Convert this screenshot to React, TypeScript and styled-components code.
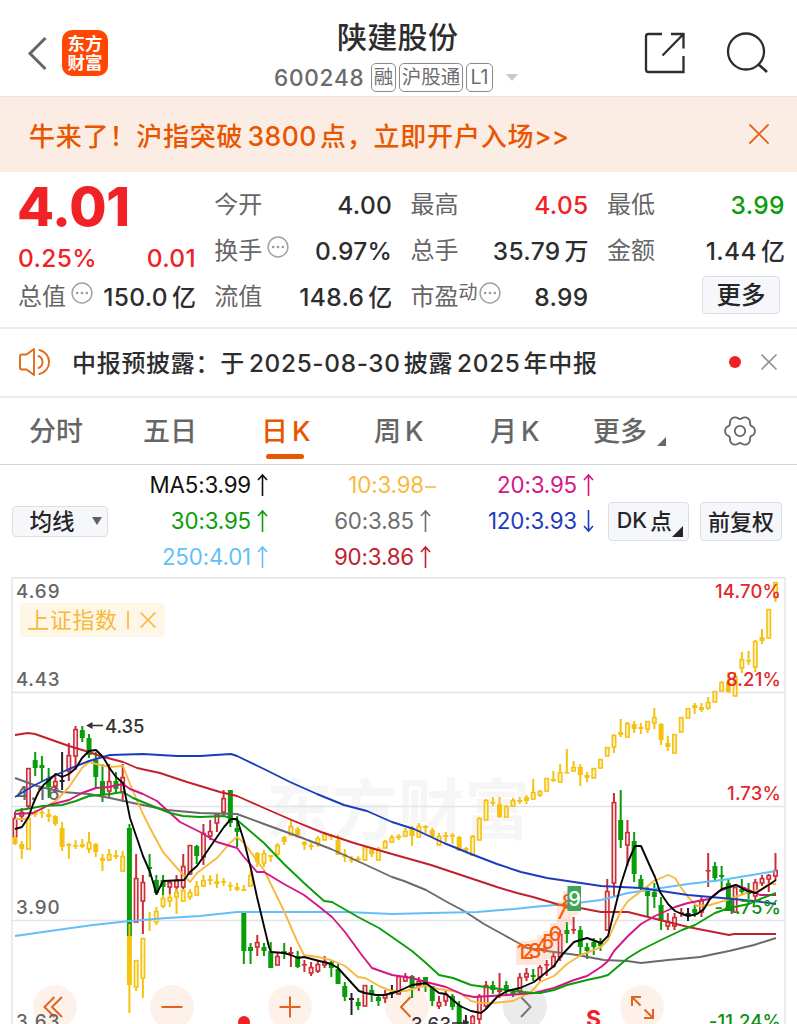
import React from "react";
import styled, { createGlobalStyle } from "styled-components";

const GlobalStyle = createGlobalStyle`
  * { box-sizing: border-box; }
  html, body { margin: 0; padding: 0; background: #fff; }
  body {
    width: 797px;
    height: 1024px;
    overflow: hidden;
    font-family: Inter, "Noto Sans CJK SC", sans-serif;
    color: #2d2d2f;
    text-autospace: no-autospace;
  }
`;

const UP = "#f02226";
const DOWN = "#0a9d0a";
const ACCENT = "#e85600";

const Screen = styled.main`
  display: flex;
  flex-direction: column;
  width: 797px;
  height: 1024px;
  overflow: hidden;
  white-space: nowrap;
`;

/* ---------- header ---------- */
const Header = styled.header`
  display: grid;
  grid-template-columns: 274px 1fr 170px;
  height: 97px;
  border-bottom: 1px solid #e6e6e8;
`;
const HeaderLeft = styled.div`
  display: flex;
  align-items: flex-start;
  padding: 30px 0 0 27px;
  gap: 14px;
`;
const HeaderRight = styled.div`
  display: flex;
  align-items: flex-start;
  gap: 38px;
  padding: 30px 0 0 15px;
`;
const Logo = styled.div`
  display: grid;
  grid-template-columns: 17.5px 17.5px;
  grid-auto-rows: 19px;
  place-content: center;
  place-items: center;
  width: 46px;
  height: 46px;
  padding-bottom: 1px;
  border-radius: 10px;
  background: #ff4602;
  color: #fff;
  font-size: 17.5px;
  line-height: 19px;
  font-weight: 700;
`;
const TitleBlock = styled.div`
  display: flex;
  flex-direction: column;
`;
const Title = styled.h1`
  margin: 16px 0 0 63px;
  font-size: 30px;
  line-height: 42px;
  letter-spacing: 0.3px;
  font-weight: 500;
`;
const SubTitle = styled.div`
  display: flex;
  align-items: center;
  margin-top: 5px;
  height: 29px;
`;
const Code = styled.span`
  width: 97px;
  font-size: 22.5px;
  letter-spacing: 0.8px;
  font-weight: 500;
  color: #6b6b6b;
`;
const Tag = styled.span<{ $w: number }>`
  display: flex;
  align-items: center;
  justify-content: center;
  width: ${(p) => p.$w}px;
  height: 29px;
  margin-right: 3px;
  border: 1px solid #8a8a8a;
  border-radius: 5px;
  font-size: 19.5px;
  line-height: 27px;
  color: #6e6e6e;
`;
const Caret = styled.i`
  margin-left: 10px;
  border: 6.5px solid transparent;
  border-top: 7px solid #c9c9c9;
  border-bottom: 0;
`;

/* ---------- banner ---------- */
const Banner = styled.section`
  display: flex;
  align-items: center;
  justify-content: space-between;
  height: 75px;
  padding: 0 28px 1px 29px;
  background: #fcede4;
  color: ${ACCENT};
  font-size: 26px;
  font-weight: 500;
  letter-spacing: 0.8px;
`;
const Latin = styled.span<{ $l?: number; $r?: number; $ls?: number; $size?: number }>`
  margin-left: ${(p) => p.$l ?? 4}px;
  margin-right: ${(p) => p.$r ?? 3}px;
  letter-spacing: ${(p) => p.$ls ?? 0.5}px;
  font-size: ${(p) => (p.$size ? `${p.$size}px` : "inherit")};
`;

/* ---------- quote ---------- */
const Quote = styled.section`
  display: grid;
  grid-template-columns: repeat(4, 178px);
  column-gap: 18.3px;
  height: 157px;
  padding: 10px 0 0 18px;
  border-bottom: 2px solid #ededf0;
`;
const QuoteColumn = styled.div`
  display: grid;
  grid-template-rows: 46px 46px 46px;
`;
const PriceColumn = styled.div`
  display: grid;
  grid-template-rows: 59px 33px 46px;
`;
const Price = styled.div`
  margin: -2px 0 0 -1px;
  font-size: 54px;
  line-height: 54px;
  font-weight: 800;
  letter-spacing: -0.3px;
  color: ${UP};
`;
const Row = styled.div<{ $color?: string }>`
  display: flex;
  align-items: center;
  justify-content: space-between;
  color: ${(p) => p.$color ?? "#2d2d2f"};
  font-size: 24.5px;
  line-height: 34px;
  font-weight: 500;
  letter-spacing: 0.35px;
`;
const Label = styled.span`
  display: flex;
  align-items: center;
  color: #666;
  font-size: 24px;
  font-weight: 400;
  letter-spacing: 0;
`;
const Unit = styled.span`
  margin-left: 4px;
  font-size: 24px;
  letter-spacing: 0;
`;
const Sup = styled.span`
  margin-top: -9px;
  font-size: 19px;
`;
const InfoWrap = styled.span<{ $l: number }>`
  display: flex;
  margin: -9px 0 0 ${(p) => p.$l}px;
`;
const SmallButton = styled.button<{ $w: number; $h: number; $size: number; $pad?: string }>`
  display: flex;
  align-items: center;
  justify-content: center;
  position: relative;
  width: ${(p) => p.$w}px;
  height: ${(p) => p.$h}px;
  padding: ${(p) => p.$pad ?? "0 0 3px"};
  border: 1px solid #dadfe4;
  border-radius: 4px;
  background: #f5f7fa;
  font-family: inherit;
  font-size: ${(p) => p.$size}px;
  font-weight: 500;
  color: #252527;
`;
const MoreSlot = styled.div`
  display: flex;
  align-items: flex-start;
  padding: 2px 0 0 95px;
`;

/* ---------- notice ---------- */
const Notice = styled.section`
  display: flex;
  align-items: center;
  height: 69px;
  padding: 0 20px 2px 18px;
  border-bottom: 2px solid #ededf0;
  font-size: 24px;
  font-weight: 500;
  letter-spacing: 0.7px;
`;
const NoticeText = styled.span`
  flex: 1;
  margin-left: 20px;
`;
const Dot = styled.i`
  width: 12px;
  height: 12px;
  margin-right: 20px;
  border-radius: 50%;
  background: ${UP};
`;

/* ---------- tabs ---------- */
const Tabs = styled.nav`
  display: grid;
  grid-template-columns: 114px 118px 113px 116px 103px 131px 1fr;
  height: 67px;
  padding-left: 29px;
  border-bottom: 1px solid #d4d4d6;
`;
const Tab = styled.div<{ $active?: boolean }>`
  position: relative;
  padding-top: 13px;
  font-size: 27px;
  line-height: 42px;
  font-weight: 500;
  color: ${(p) => (p.$active ? ACCENT : "#666")};
`;
const Underline = styled.i`
  position: absolute;
  left: 5px;
  top: 56px;
  width: 38px;
  height: 5px;
  border-radius: 3px;
  background: ${ACCENT};
`;
const Corner = styled.i<{ $s: number; $c: string; $x: number; $y: number }>`
  position: absolute;
  left: ${(p) => p.$x}px;
  top: ${(p) => p.$y}px;
  border-left: ${(p) => p.$s}px solid transparent;
  border-bottom: ${(p) => p.$s}px solid ${(p) => p.$c};
`;

/* ---------- moving averages ---------- */
const MaPanel = styled.section`
  display: grid;
  grid-template-columns: 96px 163px 163px 163px 11px 81px 11px 82px;
  align-items: center;
  height: 112px;
  padding-left: 12px;
`;
const MaColumn = styled.div`
  display: flex;
  flex-direction: column;
  padding-bottom: 1px;
`;
const MaItem = styled.div<{ $color: string; $shift?: number }>`
  display: flex;
  align-items: center;
  justify-content: flex-end;
  height: 36px;
  margin-right: ${(p) => -(p.$shift ?? 0)}px;
  color: ${(p) => p.$color};
  font-size: 22.3px;
  letter-spacing: -0.15px;
`;
const Triangle = styled.i`
  margin: 2px 0 0 17px;
  border: 5px solid transparent;
  border-top: 8px solid #606064;
  border-bottom: 0;
`;

/* ---------- chart ---------- */
const ChartArea = styled.section`
  position: relative;
  flex: 1;
  overflow: hidden;
`;
const ChartSvg = styled.svg`
  position: absolute;
  inset: 0;
  font-family: Inter, "Noto Sans CJK SC", sans-serif;
`;
const Watermark = styled.div`
  position: absolute;
  left: 266px;
  top: 180px;
  font: 700 66px/96px "Noto Sans CJK SC", sans-serif;
  color: #f6f6f6;
`;
const RoundButton = styled.button<{ $x: number; $gray?: boolean }>`
  position: absolute;
  left: ${(p) => p.$x - 22}px;
  top: 408px;
  width: 44px;
  height: 44px;
  padding: 0;
  border: 0;
  border-radius: 50%;
  background: ${(p) => (p.$gray ? "#ebebeb" : "#fef1ea")};
  color: ${(p) => (p.$gray ? "#777" : "#e2651f")};
`;
const IndexTag = styled.div`
  position: absolute;
  left: 20px;
  top: 26px;
  display: flex;
  align-items: center;
  gap: 9px;
  width: 145px;
  height: 34px;
  padding-left: 7px;
  border-radius: 4px;
  background: #fef6e6;
  color: #f9b93c;
  font-size: 22px;
  line-height: 32px;
  letter-spacing: 0.7px;
`;

const Cross = ({ size, color, width }: { size: number; color: string; width: number }) => (
  <svg width={size} height={size} viewBox={`0 0 ${size} ${size}`} fill="none" stroke={color} strokeWidth={width} strokeLinecap="round">
    <path d={`M1 1L${size - 1} ${size - 1}M${size - 1} 1L1 ${size - 1}`} />
  </svg>
);

const Info = ({ left = 5 }: { left?: number }) => (
  <InfoWrap $l={left}>
    <svg width="22" height="22" viewBox="0 0 22 22" fill="none" stroke="#a2a2a2" strokeWidth="1.5">
      <circle cx="11" cy="11" r="9.9" />
      <g fill="#999" stroke="none">
        <circle cx="6.2" cy="11" r="1.3" />
        <circle cx="11" cy="11" r="1.3" />
        <circle cx="15.8" cy="11" r="1.3" />
      </g>
    </svg>
  </InfoWrap>
);

const Arrow = ({ dir }: { dir: "up" | "down" | "flat" }) =>
  dir === "flat" ? (
    <svg width="13" height="24" viewBox="0 0 13 24" fill="none" stroke="currentColor" strokeWidth="1.6">
      <path d="M1 14H12" />
    </svg>
  ) : (
    <svg width="19" height="24" viewBox="0 0 19 24" fill="none" stroke="currentColor" strokeWidth="1.6">
      <path d={dir === "up" ? "M11.5 23V2M7 7L11.5 2L16 7" : "M11.5 1V22M7 17L11.5 22L16 17"} />
    </svg>
  );

const gearPath =
  Array.from({ length: 121 }, (_, i) => {
    const t = (i * Math.PI) / 60;
    const r = 13.7 + 1.45 * Math.cos(6 * t) - 0.25 * Math.cos(12 * t);
    return `${i ? "L" : "M"}${(16 + r * Math.cos(t)).toFixed(2)} ${(16 + r * Math.sin(t)).toFixed(2)}`;
  }).join("") + "Z";

/* Candle: high, body top, body bottom, low, kind (r hollow, g filled, k flat). */
type Candle = [number, number, number, number, string];
const parse = (s: string): Candle[] =>
  s.trim().split(/\s+/).map((c) => {
    const p = c.split(",");
    return [+p[0], +p[1], +p[2], +p[3], p[4]];
  });

const stock = parse(`
812,818,837,840,r 808,812,816,822,r 768,768,806,808,r 752,760,768,776,g 756,765,768,781,g 768,778,787,798,g
773,781,786,793,r 752,780,782,790,k 743,755,771,781,r 726,729,756,770,r 726,730,738,742,g 734,738,755,758,g
752,760,777,788,g 764,781,794,802,g 764,781,791,798,r 772,781,789,793,g 764,777,792,802,r 824,828,936,955,g
854,878,922,922,r 875,882,901,934,r 854,867,869,877,g 875,880,893,895,g 875,880,887,895,g 880,882,887,894,r
875,880,887,894,r 854,866,887,889,r 845,845,874,875,r 845,846,856,864,g 824,833,857,865,r 820,831,836,840,r
813,814,823,832,r 790,798,812,817,r 790,790,823,827,g 816,828,832,847,g 913,913,951,964,g 943,947,951,964,g
935,942,947,956,r 943,947,951,956,g 942,951,968,968,g 953,956,965,965,r 943,951,954,959,g 947,952,954,967,r
951,956,967,968,g 960,964,965,972,r 962,967,973,976,r 960,964,971,973,r 956,961,965,968,r 961,962,968,977,g
964,969,984,984,g 982,986,997,1001,g 993,998,1000,1015,k 998,1002,1006,1010,g 985,985,1006,1006,r 985,990,994,1002,g
994,997,1001,1006,g 990,994,998,1003,r 985,992,994,998,k 976,976,994,994,r 973,976,981,982,r 975,976,988,998,g
977,981,986,991,r 977,977,987,992,g 986,986,1001,1006,g 996,1002,1006,1009,r 990,994,1001,1006,r 994,996,1007,1010,g
1001,1005,1024,1026,g 1015,1021,1023,1026,k 1015,1016,1024,1026,r 994,996,1019,1024,r 981,985,1006,1009,r 981,985,990,994,g
973,990,992,998,r 981,985,991,994,g 989,992,995,997,g 973,977,991,994,r 968,973,977,981,r 969,975,977,981,g
965,967,977,981,r 960,964,965,976,r 952,956,966,968,r 930,934,957,961,r 922,930,934,943,g 917,929,930,934,r
926,930,947,955,g 943,947,951,959,g 938,942,947,955,g 938,942,946,951,g 879,891,930,931,r 793,802,883,896,r
790,820,840,848,g 820,832,845,866,r 832,841,874,882,g 875,879,887,891,g 887,891,896,916,g 883,892,897,908,g
897,905,921,930,g 913,921,926,930,r 913,917,926,930,r 908,912,914,917,r 908,913,915,921,k 905,909,913,917,g
897,900,912,917,r 853,870,871,887,r 862,866,878,882,g 866,875,877,891,g 879,883,911,911,g 887,887,912,913,r
879,889,892,894,g 883,892,894,899,g 879,882,896,900,r 875,878,883,886,r 874,875,879,892,r 853,870,876,880,r`);

const index = parse(`
836,837,844,845,g 841,844,849,859,g 818,818,849,849,r 810,812,815,817,g 809,812,813,818,g 809,814,817,822,g
815,816,824,826,g 822,828,847,851,g 843,844,846,859,r 840,845,846,849,g 839,844,847,848,g 832,842,849,853,r
843,844,852,857,g 854,858,861,871,g 849,854,860,861,r 850,855,857,859,r 851,856,871,871,r 924,936,985,1013,g
960,960,987,991,r 938,938,978,998,r 912,919,920,931,g 907,911,922,925,r 895,898,906,908,r 894,897,901,907,r
889,892,897,914,r 889,890,901,902,r 889,892,897,900,r 881,886,895,895,r 875,880,886,887,r 875,879,881,885,g
874,881,884,888,r 878,881,882,886,g 882,885,886,891,g 883,887,890,891,g 885,889,891,891,g 871,875,886,886,r
852,853,862,867,g 850,853,863,867,r 855,855,857,862,g 843,845,854,856,r 836,837,842,845,g 820,826,835,835,r
827,829,835,838,g 841,842,845,850,g 843,845,847,850,g 836,838,843,847,r 832,834,840,840,r 834,835,837,840,g
835,840,855,855,g 849,854,857,862,g 856,859,860,863,g 856,858,860,861,g 846,847,860,860,r 848,849,854,857,g
847,849,860,860,r 840,841,848,848,r 835,837,842,843,r 834,836,838,840,g 828,831,836,837,r 826,828,836,846,g
823,826,837,837,r 825,826,828,833,g 828,830,837,837,g 833,836,845,845,r 832,835,837,842,g 833,835,836,844,g
836,837,851,851,g 847,848,851,852,g 835,836,855,855,r 817,818,840,840,r 799,800,820,820,r 797,802,803,806,g
797,804,817,818,g 805,806,817,817,r 798,800,806,807,r 797,800,802,804,g 795,797,801,804,g 779,792,799,800,r
790,791,795,797,r 778,778,791,791,r 771,779,781,782,g 764,772,782,782,r 749,772,773,773,g 761,767,771,771,r
764,767,775,786,g 772,775,778,782,g 768,768,778,778,r 759,759,768,768,r 747,747,756,756,r 734,735,747,753,r
719,732,735,737,g 722,723,737,737,r 721,724,729,733,g 723,727,729,734,g 721,721,729,733,r 708,717,723,729,r
723,724,740,745,g 736,743,747,751,g 734,734,753,753,r 717,717,732,732,r 708,708,718,718,r 703,705,708,714,g
703,707,710,712,g 697,702,708,710,r 691,691,702,702,r 681,682,691,691,r 672,682,692,693,g 672,676,696,696,r
652,659,668,673,r 651,660,661,665,g 640,641,667,672,r 629,637,641,644,g 609,609,638,638,r 582,582,597,602,r`);

const averages: [string, string][] = [
  ["#6a6a6a", "15,778 37,786 62,792 89,794 110,798 133,803 167,810 200,813 237,814 264,824 297,836 331,849 364,864 392,877 404,881 426,890 447,902 464,911 484,924 504,935 522,945 527,948 547,951 577,955 604,960 627,961 641,963 668,960 700,957 729,951 754,945 776,938"],
  ["#63bff8", "15,936 50,931 93,925 130,921 167,918 200,916 237,912 270,912 347,912 392,914 431,913 477,912 514,909 533,907 577,903 601,900 628,893 661,888 688,884 722,880 776,871"],
  ["#c1202c", "15,735 28,733 35,734 69,746 89,752 100,756 123,762 137,768 160,773 187,782 220,792 237,796 264,808 294,821 321,832 354,843 392,854 431,865 464,876 497,887 517,893 533,897 560,905 580,908 601,912 628,912 648,917 668,922 688,927 729,935 734,934 776,934"],
  ["#f8b93f", "15,819 25,819 35,812 49,805 57,800 69,787 82,768 89,762 100,765 110,767 123,766 130,784 142,812 150,828 163,852 177,868 190,882 197,873 217,858 230,843 237,837 244,843 264,870 284,911 297,941 304,955 318,957 331,960 345,966 358,977 365,978 381,987 392,991 406,991 419,987 426,986 439,989 453,991 460,993 471,1001 480,1003 493,1003 513,1001 531,992 540,982 554,976 567,964 581,955 601,947 608,940 614,926 621,911 628,901 640,892 654,881 668,875 675,878 682,889 688,897 697,906 710,905 727,900 749,892 760,890 769,884 776,884"],
  ["#d71582", "15,814 33,813 49,805 69,800 82,793 96,788 109,787 123,784 130,789 143,794 157,801 180,822 200,832 217,842 237,848 244,857 257,872 264,872 284,884 304,895 317,905 332,917 345,932 361,954 372,968 392,975 412,978 426,982 446,987 464,995 474,997 507,995 534,993 554,988 574,980 587,976 601,967 608,961 614,951 628,936 641,924 655,916 675,907 688,903 709,899 719,891 736,885 747,889 760,895 776,895"],
  ["#0a9d0a", "15,811 43,806 62,805 76,801 89,796 110,794 123,792 133,798 150,805 170,813 183,816 200,817 224,816 237,820 250,831 264,843 284,864 304,883 324,901 332,902 358,917 379,928 392,937 412,951 426,963 439,975 453,978 471,985 493,988 513,991 533,993 540,993 554,990 567,985 587,980 601,977 608,975 628,958 641,950 661,940 682,930 695,925 715,913 729,908 749,904 760,899 776,893"],
  ["#1d3cbc", "15,797 33,786 49,778 69,769 89,761 110,755 143,754 177,756 200,756 231,754 237,756 264,769 290,782 317,794 344,805 367,811 392,822 414,829 444,843 471,854 497,864 521,872 547,878 601,886 641,888 661,891 688,895 722,898 754,901 776,904"],
  ["#050505", "15,829 22,827 28.5,817 33.5,803 38.5,792 43.5,785 56,774 62,777 69,774 76,768 82,758 89,751 96,750 103,757 109.5,768 116,777 123,783 130,818 143,856 150,872 156.5,894 163,881 184,880 190,872 197,866 217,837 224,827 231,819 237,819 244,841 251,869 257,897 269,947 271,952 284,953 291,955 298,958 304,957 331,964 338,968 348,979 359,991 365,993 376,995 385,995 399,991 412,985 426,983 439,993 446,994 460,1006 471,1011 481,1013 486,1009 497,997 507,991 520,988 534,982 544,974 554,966 560,957 574,942 587,938 601,943 608,936 614,912 621,884 628,862 635,846 641,846 649,864 655,877 660,892 668,904 675,911 682,914 688,916 697,914 704,909 710,899 722,889 736,885 747,891 756,893 767,886 776,880"],
];

const COLORS: Record<string, string> = { r: "#cc2e38", g: "#0a9d0a", k: "#222" };

const Candles = ({ data, color, pale }: { data: Candle[]; color?: string; pale: string }) => (
  <g>
    {data.map(([hi, top, bottom, low, kind], i) => {
      const x = 15 + i * 6.73;
      const c = color ?? COLORS[kind];
      const hollow = kind === "r" && bottom - top > 3;
      return (
        <g key={i} stroke={c}>
          {hollow ? (
            <>
              <path d={`M${x} ${hi}V${top}M${x} ${bottom}V${low}`} strokeWidth="2" />
              <rect x={x - 1.7} y={top + 0.6} width="3.4" height={Math.max(1, bottom - top - 0.6)} fill={pale} strokeWidth="1.6" />
            </>
          ) : (
            <>
              <path d={`M${x} ${hi}V${low}`} strokeWidth="2" />
              <rect x={x - 2.5} y={top} width="5" height={Math.max(1.6, bottom - top)} fill={c} stroke="none" />
            </>
          )}
        </g>
      );
    })}
  </g>
);

const leftScale: [string, number][] = [["4.69", 598], ["4.43", 686], ["4.16", 800], ["3.90", 914], ["3.63", 1028]];
const rightScale: [string, number, string][] = [
  ["14.70%", 598, "#e3282e"], ["8.21%", 686, "#e3282e"], ["1.73%", 800, "#e3282e"], ["-4.75%", 914, "#0c8f14"], ["-11.24%", 1028, "#0c8f14"],
];
const sequence: [string, number, number][] = [["1", 521, 959], ["2", 528, 959], ["3", 535, 958], ["4", 542, 953], ["5", 548, 949], ["6", 555, 941], ["7", 562, 919], ["8", 568, 909]];

const Chart = () => (
  <ChartSvg width="797" height="447" viewBox="0 577 797 447" fill="none">
    <g stroke="#e3e3ea" strokeWidth="1.4">
      <path d="M12 1024V577.7H785V1024" />
      <path d="M12 692.5H785M12 806.5H785M12 920.5H785" />
    </g>
    {leftScale.map(([t, y]) => (
      <text key={t} x="16" y={y} fontSize="18.8" fontWeight="500" fill="#666" textLength="43.5">{t}</text>
    ))}
    <Candles data={stock} pale="#fbe3e5" />
    <Candles data={index} color="#f5c211" pale="#fdf0c0" />
    {averages.map(([c, pts]) => (
      <polyline key={c} points={pts} stroke={c} strokeWidth="1.9" strokeLinejoin="round" />
    ))}
    {rightScale.map(([t, y, c]) => (
      <text key={t} x="781" y={y} fontSize="18.5" fontWeight="500" fill={c} textAnchor="end" letterSpacing="0.15">{t}</text>
    ))}
    <g fill="#ff9c70" opacity="0.25">
      {sequence.map(([t, x, y]) => <rect key={t} x={x - 5} y={y - 18} width="15" height="24" />)}
    </g>
    <g fontSize="20" fontWeight="500" fill="#f95b0c" textAnchor="middle">
      {sequence.map(([t, x, y]) => <text key={t} x={x} y={y}>{t}</text>)}
    </g>
    <rect x="567.5" y="886" width="13.5" height="25" fill="#3da55c" />
    <text x="574.5" y="906" fontSize="20" fontWeight="500" fill="#fff" textAnchor="middle">9</text>
    <g fill="#333" stroke="#333">
      <text x="105" y="732.5" fontSize="18.5" fontWeight="500" stroke="none" textLength="39.5">4.35</text>
      <path d="M89 725.5H103" strokeWidth="1.6" />
      <path d="M86 725.5L92.500 722V729Z" stroke="none" />
      <text x="411" y="1031" fontSize="18.5" fontWeight="500" stroke="none" textLength="40">3.63</text>
      <path d="M452 1023H466" strokeWidth="1.6" />
      <path d="M469.500 1023L463 1019.500V1026.500Z" stroke="none" />
    </g>
    <circle cx="244" cy="1022" r="6" fill="#f02226" />
    <text x="586" y="1027" fontSize="23" fontWeight="700" fill="#f02226">S</text>
  </ChartSvg>
);

const Icon = ({ d, width = 2 }: { d: string; width?: number }) => (
  <svg width="44" height="44" viewBox="0 0 44 44" fill="none" stroke="currentColor" strokeWidth={width}>
    <path d={d} />
  </svg>
);

export default function App() {
  return (
    <Screen>
      <GlobalStyle />
      <Header>
        <HeaderLeft>
          <svg width="21" height="46" viewBox="0 0 21 46" fill="none" stroke="#666" strokeWidth="3">
            <path d="M18.5 8L3 23.5L18.5 39" />
          </svg>
          <Logo><span>东</span><span>方</span><span>财</span><span>富</span></Logo>
        </HeaderLeft>
        <TitleBlock>
          <Title>陕建股份</Title>
          <SubTitle>
            <Code>600248</Code>
            <Tag $w={25}>融</Tag>
            <Tag $w={64}>沪股通</Tag>
            <Tag $w={27}>L1</Tag>
            <Caret />
          </SubTitle>
        </TitleBlock>
        <HeaderRight>
          <svg width="46" height="46" viewBox="0 0 46 46" fill="none" stroke="#2d2d2f" strokeWidth="2.3">
            <path d="M20 4H6.500Q4 4 4 6.500V39.500Q4 42 6.500 42H41.500V26" />
            <path d="M29 4H41.500V18.500M41.500 4L20.500 25.500" />
          </svg>
          <svg width="46" height="46" viewBox="0 0 46 46" fill="none" stroke="#2d2d2f" strokeWidth="2.3">
            <circle cx="20" cy="21.500" r="18" />
            <path d="M32 34L41 42" strokeWidth="2.600" />
          </svg>
        </HeaderRight>
      </Header>

      <Banner>
        <span>牛来了！沪指突破<Latin $size={26.5}>3800</Latin>点，立即开户入场<Latin $l={0} $r={0} $ls={0}>&gt;&gt;</Latin></span>
        <Cross size={20} color="#e2651f" width={1.8} />
      </Banner>

      <Quote>
        <PriceColumn>
          <Price>4.01</Price>
          <Row $color={UP}><span>0.25%</span><span>0.01</span></Row>
          <Row><Label>总值<Info /></Label><span>150.0<Unit>亿</Unit></span></Row>
        </PriceColumn>
        <QuoteColumn>
          <Row><Label>今开</Label><span>4.00</span></Row>
          <Row><Label>换手<Info /></Label><span>0.97%</span></Row>
          <Row><Label>流值</Label><span>148.6<Unit>亿</Unit></span></Row>
        </QuoteColumn>
        <QuoteColumn>
          <Row $color={UP}><Label>最高</Label><span>4.05</span></Row>
          <Row><Label>总手</Label><span>35.79<Unit>万</Unit></span></Row>
          <Row><Label>市盈<Sup>动</Sup><Info left={1} /></Label><span>8.99</span></Row>
        </QuoteColumn>
        <QuoteColumn>
          <Row $color={DOWN}><Label>最低</Label><span>3.99</span></Row>
          <Row><Label>金额</Label><span>1.44<Unit>亿</Unit></span></Row>
          <MoreSlot><SmallButton $w={78} $h={38} $size={24.5}>更多</SmallButton></MoreSlot>
        </QuoteColumn>
      </Quote>

      <Notice>
        <svg width="34" height="30" viewBox="0 0 34 30" fill="none" stroke="#e26a1c" strokeWidth="1.9" strokeLinejoin="round" strokeLinecap="round">
          <path d="M16 2V28L8.500 22.500H4Q2 22.500 2 20.500V9.500Q2 7.500 4 7.500H8.500Z" />
          <path d="M20.500 9A6.500 6.500 0 0 1 20.500 21M21.500 3A12.300 12.300 0 0 1 21.500 27" />
        </svg>
        <NoticeText>中报预披露：于<Latin $ls={0.7} $size={24.3}>2025-08-30</Latin>披露<Latin $ls={0.7} $size={24.3}>2025</Latin>年中报</NoticeText>
        <Dot />
        <Cross size={16} color="#929292" width={1.7} />
      </Notice>

      <Tabs>
        <Tab>分时</Tab>
        <Tab>五日</Tab>
        <Tab $active>日<Latin $l={4}>K</Latin><Underline /></Tab>
        <Tab>周<Latin $l={4}>K</Latin></Tab>
        <Tab>月<Latin $l={4}>K</Latin></Tab>
        <Tab>更多<Corner $s={9} $c="#666" $x={64} $y={39} /></Tab>
        <Tab>
          <svg width="32" height="32" viewBox="0 0 32 32" fill="none" stroke="#666" strokeWidth="1.8" style={{ marginTop: 4 }}>
            <path d={gearPath} />
            <circle cx="16" cy="16" r="5.2" />
          </svg>
        </Tab>
      </Tabs>

      <MaPanel>
        <SmallButton $w={96} $h={31} $size={22.5} $pad="0 0 2px 11px">均线<Triangle /></SmallButton>
        <MaColumn>
          <MaItem $color="#111" $shift={-1}>MA5:3.99<Arrow dir="up" /></MaItem>
          <MaItem $color="#0a9d0a" $shift={-1}>30:3.95<Arrow dir="up" /></MaItem>
          <MaItem $color="#63bff8" $shift={-1}>250:4.01<Arrow dir="up" /></MaItem>
        </MaColumn>
        <MaColumn>
          <MaItem $color="#f8b93f" $shift={3}>10:3.98<Arrow dir="flat" /></MaItem>
          <MaItem $color="#6e6e6e" $shift={-1}>60:3.85<Arrow dir="up" /></MaItem>
          <MaItem $color="#c1202c" $shift={-1}>90:3.86<Arrow dir="up" /></MaItem>
        </MaColumn>
        <MaColumn>
          <MaItem $color="#d71582" $shift={-1}>20:3.95<Arrow dir="up" /></MaItem>
          <MaItem $color="#1d3cbc" $shift={-1}>120:3.93<Arrow dir="down" /></MaItem>
          <MaItem $color="#fff" />
        </MaColumn>
        <span />
        <SmallButton $w={81} $h={39} $size={21.5}>DK<Latin $l={3} $r={8}>点</Latin><Corner $s={11} $c="#252527" $x={63} $y={23} /></SmallButton>
        <span />
        <SmallButton $w={82} $h={39} $size={22}>前复权</SmallButton>
      </MaPanel>

      <ChartArea>
        <Watermark>东方财富</Watermark>
        <RoundButton $x={55}><Icon d="M21.500 12L11.500 22L21.500 32M29 12L19 22L29 32" /></RoundButton>
        <RoundButton $x={172}><Icon d="M11.500 22H32.500" /></RoundButton>
        <RoundButton $x={289.7}><Icon d="M11.500 22H32.500M22 11.500V32.500" /></RoundButton>
        <RoundButton $x={407}><Icon d="M25.500 12L16 22L25.500 32" /></RoundButton>
        <RoundButton $x={525} $gray><Icon d="M18 12L27.500 22L18 32" /></RoundButton>
        <RoundButton $x={641.5}><Icon d="M21 12H12V21M12 12L20.500 20.500M24 33H33V24M33 33L24.500 24.500" /></RoundButton>
        <Chart />
        <IndexTag>
          <span>上证指数</span>
          <svg width="30" height="22" viewBox="0 0 30 22" fill="none" stroke="currentColor" strokeWidth="1.7">
            <path d="M1 2V20M13.500 3.500L28.500 18.500M28.500 3.500L13.500 18.500" />
          </svg>
        </IndexTag>
      </ChartArea>
    </Screen>
  );
}
